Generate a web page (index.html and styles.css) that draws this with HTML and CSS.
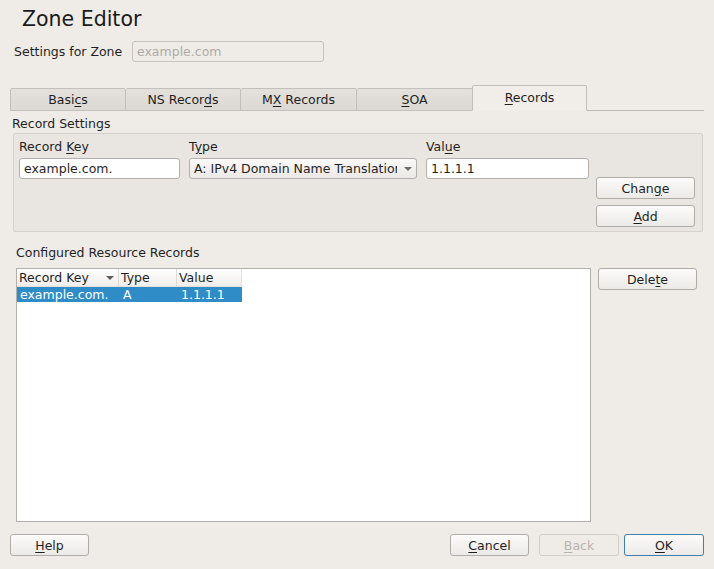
FILE: index.html
```html
<!DOCTYPE html>
<html>
<head>
<meta charset="utf-8">
<link rel="stylesheet" href="styles.css">
</head>
<body>
<div class="dialog">
  <h1 class="title">Zone Editor</h1>
  <div class="zone-row">
    <span class="zone-label">Settings for Zone</span>
    <div class="field disabled">example.com</div>
  </div>

  <div class="tabbar">
    <div class="tab w116">Basi<u>c</u>s</div>
    <div class="tab w115">NS Recor<u>d</u>s</div>
    <div class="tab w116">M<u>X</u> Records</div>
    <div class="tab w116"><u>S</u>OA</div>
    <div class="tab active w115"><u>R</u>ecords</div>
  </div>

  <div class="section-label">Record Settings</div>
  <div class="group">
    <div class="col w161">
      <div class="lbl">Record <u>K</u>ey</div>
      <div class="field">example.com.</div>
    </div>
    <div class="col w228">
      <div class="lbl">T<u>y</u>pe</div>
      <div class="combo"><span class="combo-text">A: IPv4 Domain Name Translation</span><span class="arrow"></span></div>
    </div>
    <div class="col w163">
      <div class="lbl">Val<u>u</u>e</div>
      <div class="field">1.1.1.1</div>
    </div>
    <div class="btn-col">
      <button class="btn w98">Chan<u>g</u>e</button>
      <button class="btn w98"><u>A</u>dd</button>
    </div>
  </div>

  <div class="section-label list-label">Configured Resource Records</div>
  <div class="list-row">
    <div class="table">
      <div class="thead">
        <div class="th c1">Record Key<span class="sort"></span></div>
        <div class="th c2">Type</div>
        <div class="th c3">Value</div>
      </div>
      <div class="tr selected">
        <div class="td c1">example.com.</div>
        <div class="td c2">A</div>
        <div class="td c3">1.1.1.1</div>
      </div>
    </div>
    <button class="btn w99 delete">Dele<u>t</u>e</button>
  </div>

  <div class="footer">
    <button class="btn w79"><u>H</u>elp</button>
    <div class="spacer"></div>
    <button class="btn w79"><u>C</u>ancel</button>
    <button class="btn w80 disabled-btn"><u>B</u>ack</button>
    <button class="btn w80 default"><u>O</u>K</button>
  </div>
</div>
</body>
</html>
```

FILE: styles.css
```css
* { box-sizing: border-box; }
html, body {
  margin: 0;
  padding: 0;
  background: #efece8;
}
body {
  font-family: "DejaVu Sans", sans-serif;
  font-size: 12.5px;
  color: #1f1f1f;
  width: 714px;
  height: 569px;
  overflow: hidden;
}
u { text-decoration: underline; text-underline-offset: 2px; }

.dialog { display: flex; flex-direction: column; }

.title {
  font-size: 20.5px;
  font-weight: normal;
  line-height: 21px;
  margin: 9px 0 0 22px;
  color: #1a1a1a;
}

.zone-row {
  display: flex;
  align-items: center;
  margin: 11px 0 0 14px;
}
.zone-label { width: 118px; line-height: 14px; }

.field {
  height: 21px;
  border: 1px solid #b3afab;
  border-radius: 3px;
  background: #ffffff;
  padding: 0 0 0 4px;
  line-height: 19px;
  white-space: nowrap;
  overflow: hidden;
}
.field.disabled {
  width: 192px;
  background: #efece8;
  color: #aeaaa6;
  border-color: #c6c2be;
}

.tabbar {
  display: flex;
  align-items: flex-end;
  margin: 24px 0 0 10px;
  width: 694px;
  height: 25px;
  border-bottom: 1px solid #bdb9b5;
}
.tab {
  height: 23px;
  margin-bottom: -1px;
  border: 1px solid #c3bfbb;
  border-left: 0;
  background: linear-gradient(#e4e1dd, #dcd8d4);
  text-align: center;
  line-height: 22px;
  border-radius: 2px 2px 0 0;
}
.tab:first-child { border-left: 1px solid #c3bfbb; }
.tab.active {
  height: 26px;
  background: #f1eeea;
  border-bottom-color: #f1eeea;
  border-left: 1px solid #c3bfbb;
  line-height: 22px;
  padding-top: 1px;
  margin-left: -1px;
}
.w115 { width: 115px; }
.w116 { width: 116px; }

.section-label {
  margin: 6px 0 0 12px;
  line-height: 14px;
}

.group {
  display: flex;
  margin: 2px 0 0 13px;
  width: 690px;
  height: 99px;
  border: 1px solid #d5d1cd;
  border-radius: 2px;
  background: #e9e6e2;
  padding: 6px 0 0 5px;
}
.col { display: flex; flex-direction: column; margin-right: 9px; }
.col.w163 { margin-right: 7px; }
.w161 { width: 161px; }
.w228 { width: 228px; }
.w163 { width: 163px; }
.lbl { line-height: 14px; margin-bottom: 4px; }

.combo {
  display: flex;
  align-items: center;
  height: 21px;
  border: 1px solid #b3afab;
  border-radius: 3px;
  background: linear-gradient(#fbfaf9, #ebe8e5);
  padding-left: 4px;
}
.combo-text {
  width: 203px;
  overflow: hidden;
  white-space: nowrap;
  line-height: 19px;
}
.arrow {
  margin-left: 7px;
  width: 0;
  height: 0;
  border-left: 4px solid transparent;
  border-right: 4px solid transparent;
  border-top: 4px solid #6d6a67;
}

.btn-col {
  display: flex;
  flex-direction: column;
  gap: 6px;
  padding-top: 37px;
}
.btn {
  font-family: "DejaVu Sans", sans-serif;
  font-size: 12.5px;
  color: #1f1f1f;
  height: 22px;
  padding: 0;
  border: 1px solid #b0aca8;
  border-radius: 3px;
  background: linear-gradient(#fcfbfa, #eceae7);
  line-height: 19px;
  text-align: center;
}
.w98 { width: 99px; }
.w99 { width: 99px; }
.w79 { width: 79px; }
.w80 { width: 80px; }

.list-label { margin: 14px 0 0 16px; }

.list-row {
  display: flex;
  align-items: flex-start;
  margin: 8px 0 0 16px;
}
.table {
  width: 575px;
  height: 254px;
  border: 1px solid #b3afab;
  background: #ffffff;
}
.thead { display: flex; height: 18px; }
.th {
  height: 18px;
  line-height: 17px;
  padding-left: 2px;
  background: linear-gradient(#ffffff, #f0eeeb);
  border-right: 1px solid #dedad6;
  border-bottom: 1px solid #e4e1dd;
  display: flex;
  align-items: center;
}
.c1 { width: 102px; }
.c2 { width: 58px; }
.c3 { width: 65px; }
.th.c3 { border-right: 1px solid #e6e3df; }
.th.c1 { position: relative; }
.sort {
  position: absolute;
  right: 4px;
  top: 7px;
  width: 0;
  height: 0;
  border-left: 4px solid transparent;
  border-right: 4px solid transparent;
  border-top: 4px solid #5e5b58;
}
.tr { display: flex; height: 15px; }
.tr.selected { width: 225px; background: #308cc6; color: #ffffff; }
.td { padding-left: 3px; line-height: 15px; white-space: nowrap; }
.td.c2 { padding-left: 4px; }
.td.c3 { padding-left: 4px; }

.delete { margin-left: 7px; }

.footer {
  display: flex;
  margin: 12px 0 0 10px;
  width: 694px;
}
.spacer { flex: 1; }
.footer .btn + .btn { margin-left: 10px; }
.footer .disabled-btn + .default { margin-left: 5px; }
.disabled-btn {
  color: #b7b3af;
  border-color: #d2cecb;
  background: #efece8;
}
.default { border-color: #3f7fae; }
```
